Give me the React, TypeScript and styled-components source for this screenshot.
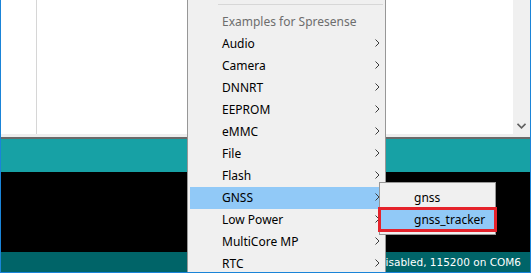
import styled, { createGlobalStyle } from "styled-components";

const Global = createGlobalStyle`
  html, body {
    margin: 0;
    padding: 0;
    width: 531px;
    height: 273px;
    overflow: hidden;
    background: #f0f0f0;
  }
`;

const Window = styled.div`
  position: relative;
  width: 531px;
  height: 273px;
  box-sizing: border-box;
  border-left: 1px solid #1a84d8;
  border-right: 1px solid #1a84d8;
  border-bottom: 1px solid #1a84d8;
  display: flex;
  flex-direction: column;
  overflow: hidden;
`;

const Editor = styled.div`
  height: 134px;
  display: flex;
  background: #ffffff;
`;

const Gutter = styled.div`
  width: 35px;
  border-right: 1px solid #d6d6d6;
`;

const Code = styled.div`
  flex: 1;
`;

const Scrollbar = styled.div`
  width: 17px;
  background: #f0f0f0;
  display: flex;
  flex-direction: column;
  justify-content: flex-end;
  align-items: center;
  padding-bottom: 5px;
  box-sizing: border-box;
`;

const Divider = styled.div`
  height: 3px;
  background: #eeeeee;
  border-bottom: 2px solid #6a6a6a;
`;

const Toolbar = styled.div`
  height: 33px;
  background: #17a1a5;
`;

const Console = styled.div`
  height: 80px;
  background: #000000;
`;

const Status = styled.div`
  height: 20px;
  background: #006468;
  color: #ffffff;
  font-family: "DejaVu Sans", sans-serif;
  font-size: 10.5px;
  display: flex;
  align-items: center;
  justify-content: flex-end;
  padding-right: 9px;
  white-space: nowrap;
`;

const Menu = styled.div`
  position: absolute;
  left: 186px;
  top: 0;
  width: 193px;
  height: 280px;
  background: #f0f0f0;
  border-left: 1px solid #979797;
  border-right: 1px solid #979797;
  padding: 4px 2px 0 2px;
  font-family: "Noto Sans", sans-serif;
  font-size: 12px;
`;

const Separator = styled.div`
  height: 1px;
  background: #d7d7d7;
  margin: 0 0 6px 28px;
`;

const Row = styled.div<{ $active?: boolean; $muted?: boolean }>`
  height: 22px;
  box-sizing: border-box;
  display: flex;
  align-items: center;
  justify-content: space-between;
  padding: 0 3px 2px 32px;
  background: ${(p) => (p.$active ? "#91c9f7" : "transparent")};
  color: ${(p) => (p.$muted ? "#6d6d6d" : "#000000")};
`;

const SubMenu = styled.div`
  position: absolute;
  left: 378px;
  top: 182px;
  width: 114px;
  background: #f0f0f0;
  border: 1px solid #979797;
  padding: 4px 0 3px 1px;
  font-family: "Noto Sans", sans-serif;
  font-size: 12px;
`;

const SubRow = styled.div<{ $active?: boolean }>`
  height: 22px;
  box-sizing: border-box;
  display: flex;
  align-items: center;
  padding: 0 0 2px 33px;
  background: ${(p) => (p.$active ? "#91c9f7" : "transparent")};
  color: #000000;
`;

const Callout = styled.div`
  position: absolute;
  left: 377px;
  top: 207px;
  width: 113px;
  height: 19px;
  border: 3px solid #e5222b;
`;

const Arrow = () => (
  <svg width="5" height="8" viewBox="0 0 5 8">
    <polyline points="0.5,0.5 4,4 0.5,7.5" fill="none" stroke="#3c3c3c" strokeWidth="1" />
  </svg>
);

const DownChevron = () => (
  <svg width="9" height="6" viewBox="0 0 9 6">
    <polyline points="0.5,0.8 4.5,4.8 8.5,0.8" fill="none" stroke="#606060" strokeWidth="1.6" />
  </svg>
);

const items = [
  "Audio",
  "Camera",
  "DNNRT",
  "EEPROM",
  "eMMC",
  "File",
  "Flash",
  "GNSS",
  "Low Power",
  "MultiCore MP",
  "RTC",
];

export default function App() {
  return (
    <>
      <Global />
      <Window>
        <Editor>
          <Gutter />
          <Code />
          <Scrollbar>
            <DownChevron />
          </Scrollbar>
        </Editor>
        <Divider />
        <Toolbar />
        <Console />
        <Status>Spresense, Debug Disabled, 115200 on COM6</Status>
        <Menu>
          <Separator />
          <Row $muted>Examples for Spresense</Row>
          {items.map((name) => (
            <Row key={name} $active={name === "GNSS"}>
              <span>{name}</span>
              <Arrow />
            </Row>
          ))}
        </Menu>
        <SubMenu>
          <SubRow>gnss</SubRow>
          <SubRow $active>gnss_tracker</SubRow>
        </SubMenu>
        <Callout />
      </Window>
    </>
  );
}
